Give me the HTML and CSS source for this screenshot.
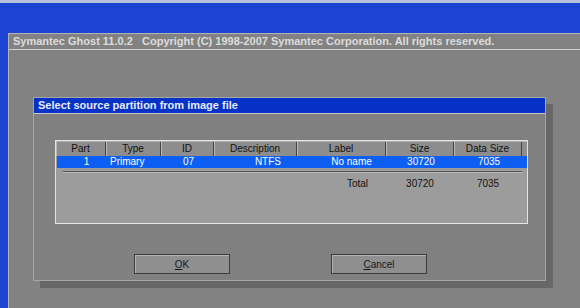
FILE: index.html
```html
<!DOCTYPE html>
<html lang="en">
<head>
    <meta charset="UTF-8">
    <title>Symantec Ghost - Select source partition</title>
    <link rel="stylesheet" href="styles.css">
</head>
<body>
    <div class="strip"></div>
    <div class="desktop">
        <div class="ghost">
            <div class="ghost-title">Symantec Ghost 11.0.2&nbsp;&nbsp; Copyright (C) 1998-2007 Symantec Corporation. All rights reserved.</div>
            <div class="ghost-body">
                <div class="dialog">
                    <div class="dialog-title">Select source partition from image file</div>
                    <div class="dialog-body">
                        <div class="table-box">
                            <div class="cols thead">
                                <span>Part</span>
                                <span>Type</span>
                                <span>ID</span>
                                <span>Description</span>
                                <span>Label</span>
                                <span>Size</span>
                                <span>Data Size</span>
                            </div>
                            <div class="cols row selected">
                                <span class="part">1</span>
                                <span class="type">Primary</span>
                                <span>07</span>
                                <span class="desc">NTFS</span>
                                <span class="label">No name</span>
                                <span>30720</span>
                                <span>7035</span>
                            </div>
                            <div class="groove"></div>
                            <div class="cols row total">
                                <span></span>
                                <span></span>
                                <span></span>
                                <span></span>
                                <span class="desc">Total</span>
                                <span>30720</span>
                                <span>7035</span>
                            </div>
                        </div>
                        <div class="buttons">
                            <button class="btn"><u>O</u>K</button>
                            <button class="btn"><u>C</u>ancel</button>
                        </div>
                    </div>
                </div>
            </div>
        </div>
    </div>
</body>
</html>
```

FILE: styles.css
```css
/* Ghost DOS-style screen */
body {
    margin: 0;
    width: 580px;
    height: 308px;
    overflow: hidden;
    background-color: #1c44d2;
    font-family: "Liberation Sans", Arial, sans-serif;
}

.strip {
    height: 3px;
    background-color: #b6c2da;
}

.desktop {
    padding: 30px 0 0 8px;
}

.ghost {
    width: 600px;
    height: 274px;
    background-color: #828282;
    border-top: 1px solid #b4b4b4;
    border-left: 1px solid #b4b4b4;
}

.ghost-title {
    height: 15px;
    line-height: 15px;
    padding-left: 4px;
    color: #dcdcdc;
    font-size: 11px;
    font-weight: bold;
    white-space: nowrap;
    border-bottom: 1px solid #cfcfcf;
}

.ghost-body {
    padding: 47px 0 0 24px;
}

.dialog {
    width: 511px;
    border: 1px solid #a6a6a6;
    background-color: #808080;
    box-shadow: 7px 7px 0 #676767;
}

.dialog-title {
    height: 15px;
    line-height: 15px;
    padding-left: 4px;
    background-color: #0632c8;
    color: #e8ecf8;
    font-size: 11px;
    font-weight: bold;
    border-bottom: 1px solid #c8c8c8;
}

.dialog-body {
    padding: 26px 0 6px 21px;
}

.table-box {
    width: 471px;
    height: 82px;
    border: 1px solid #e4e4e4;
    background-color: #9c9c9c;
}

.cols {
    display: grid;
    grid-template-columns: 50px 55px 53px 83px 89px 68px 68px;
    font-size: 10px;
}

.cols span {
    text-align: center;
    white-space: nowrap;
}

.thead {
    height: 14px;
    line-height: 14px;
    color: #111111;
    background-color: #8d8d8d;
    border-top: 1px solid #b0b0b0;
}

.thead span {
    border-right: 1px solid #444444;
    box-shadow: inset 1px 0 0 #b8b8b8;
}

.row {
    height: 12px;
    line-height: 12px;
}

.selected {
    margin-left: 1px;
    width: 470px;
    background-color: #0d5ef2;
    color: #ffffff;
}

.selected .part {
    padding-left: 9px;
}

.selected .type {
    text-align: left;
    padding-left: 3px;
}

.selected .desc {
    text-align: right;
    padding-right: 17px;
}

.selected .label {
    padding-left: 18px;
}

.groove {
    margin: 3px 5px 0 7px;
    height: 1px;
    background-color: #555555;
    border-bottom: 1px solid #bdbdbd;
}

.total {
    margin-top: 5px;
    color: #111111;
}

.total .desc {
    text-align: right;
    padding-right: 18px;
}

.buttons {
    display: flex;
    gap: 101px;
    padding: 30px 0 0 79px;
}

.btn {
    width: 96px;
    height: 20px;
    padding: 0;
    background-color: #8f8f8f;
    border: 1px solid #3c3c3c;
    box-shadow: inset 1px 1px 0 #b4b4b4;
    color: #181818;
    font-family: "Liberation Sans", Arial, sans-serif;
    font-size: 10px;
}
```
